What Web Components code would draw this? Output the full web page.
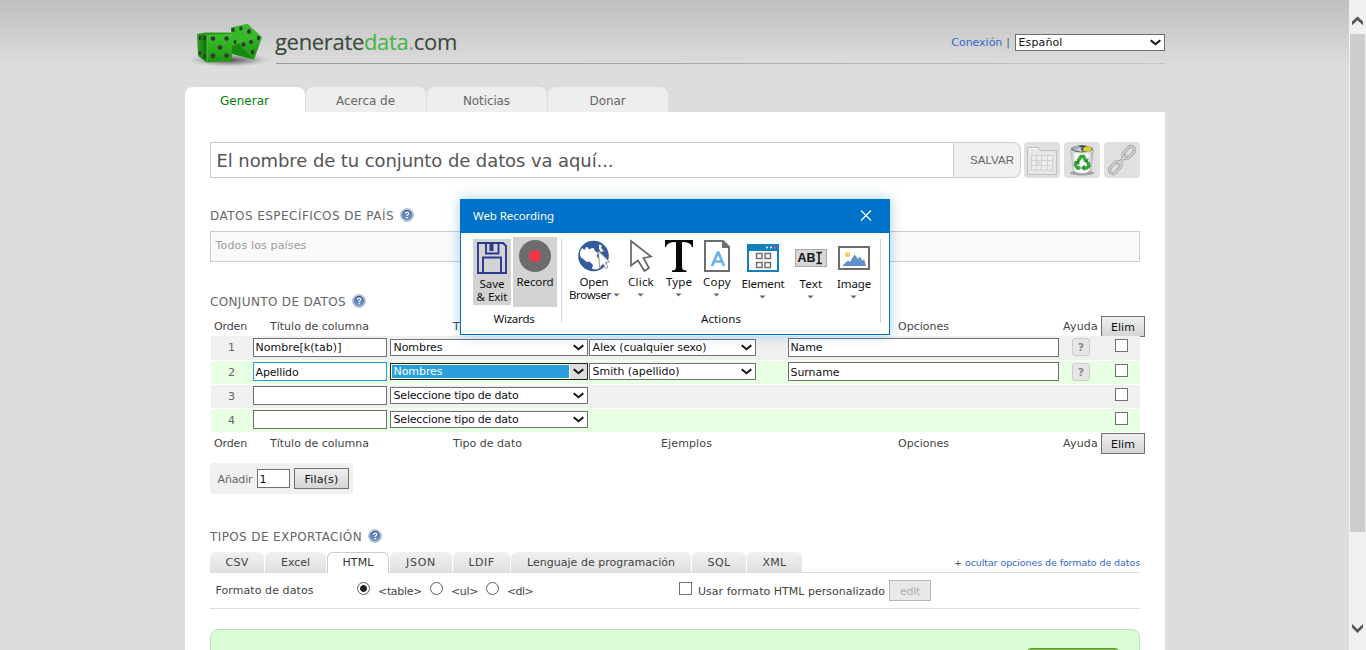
<!DOCTYPE html>
<html lang="es">
<head>
<meta charset="utf-8">
<title>generatedata.com</title>
<style>
html,body{margin:0;height:650px;overflow:hidden;background:#ddd}
body{font:11px/16px "DejaVu Sans",Verdana,sans-serif;color:#444}
</style>
</head>
<body>
<gd-app></gd-app>
<script>
const define = (name, html, after) => customElements.define(name, class extends HTMLElement {
  connectedCallback() {
    if (this.shadowRoot) return;
    const t = document.createElement('template');
    t.innerHTML = typeof html === 'function' ? html(this) : html;
    this.attachShadow({mode: 'open'}).append(t.content.cloneNode(true));
    if (after) after(this);
  }
});

/* Application shell */
define('gd-app', `
<style>
:host{display:flex;width:1366px;height:650px;overflow:hidden;position:relative}
.page{flex:1;background:linear-gradient(#bfbfbf,#ddd 66px)}
.col{width:980px;margin-left:185px}
gd-dialog{position:absolute;left:460px;top:199px}
</style>
<div class="page"><div class="col"><gd-header></gd-header><gd-nav></gd-nav><gd-content></gd-content></div></div>
<gd-scrollbar></gd-scrollbar>
<gd-dialog></gd-dialog>`);

define('gd-scrollbar', `
<style>
:host{display:flex;flex-direction:column;width:17px;height:650px;background:#f0f0f0;box-sizing:border-box}
.thumb{height:498px;width:15px;margin-left:1px;background:#cdcdcd}
svg{display:block}
.sp{flex:1}
</style>
<svg width="17" height="34"><path d="M3 25.2V21.6L8.5 16.6L14 21.6V25.2L8.5 20.2Z" fill="#555"/></svg>
<div class="thumb"></div><div class="sp"></div>
<svg width="17" height="34"><path d="M3 8V11.6L8.5 17L14 11.6V8L8.5 13.2Z" fill="#555"/></svg>`);

define('gd-header', `
<style>
:host{display:flex;height:87px;box-sizing:border-box}
svg{display:block;margin:16px 0 0 1px;flex:none}
.r{flex:1;display:flex;height:64px;box-sizing:border-box;border-bottom:1px solid;border-image:linear-gradient(90deg,#999,#aaa 50%,#c8c8c8) 1;justify-content:space-between}
.logo{font:22px/30px "Open Sans","Noto Sans",sans-serif;color:#3a4a3c;margin:26px 0 0 -1px;-webkit-text-stroke:.15px}
.g{color:#48b648}.dot{color:#999}
.user{display:flex;margin-top:34px;height:17px;line-height:17px}
.a{color:#36c}.bar{color:#467;margin:0 5px 0 4px}
</style>
<svg width="90" height="56" viewBox="186 16 90 56">
<defs><radialGradient id="s"><stop offset="0" stop-color="#222" stop-opacity=".8"/><stop offset=".6" stop-color="#555" stop-opacity=".35"/><stop offset="1" stop-color="#999" stop-opacity="0"/></radialGradient>
<linearGradient id="f" x1="0" y1="0" x2="0" y2="1"><stop offset="0" stop-color="#40c230"/><stop offset="1" stop-color="#1c9512"/></linearGradient>
<linearGradient id="l"><stop offset="0" stop-color="#30a025"/><stop offset="1" stop-color="#106b0a"/></linearGradient></defs>
<ellipse cx="229" cy="60" rx="41" ry="7" fill="url(#s)"/>
<path d="M231 27.500L247.500 24L262 37.500L254 59.500L232 53Z" fill="url(#f)"/>
<path d="M231 27.500L247.500 24L262 37.500L239 43L232 47Z" fill="#36b829"/>
<path d="M232 46L239 43L254 59.500L232 54Z" fill="#168c0e"/>
<path d="M247.500 25L239 43L254 59" fill="none" stroke="#40c230" stroke-width=".5"/>
<path d="M197 34L207 34L207 62.500L198 56Z" fill="url(#l)"/>
<path d="M207 34L232 33V61L207 62.500Z" fill="url(#f)"/>
<path d="M197 34L205 32.500L230 32.500L232 34L207 35Z" fill="#2a9c1f"/>
<path d="M207 35V62" stroke="#54dc40" stroke-width=".7"/>
<g fill="#313931"><circle cx="213" cy="38.500" r="2.300"/><circle cx="226.500" cy="38.500" r="2.200"/><circle cx="220" cy="47.500" r="2.300"/><circle cx="213" cy="56" r="2.400"/><circle cx="226.500" cy="55.500" r="2.300"/>
<ellipse cx="200" cy="38" rx="1.200" ry="2.200"/><ellipse cx="204.500" cy="38.500" rx="1.300" ry="2.300"/><ellipse cx="200" cy="53" rx="1.200" ry="2.200"/><ellipse cx="204.500" cy="56" rx="1.300" ry="2.300"/>
<ellipse cx="233" cy="30" rx="1.700" ry="1.900"/><ellipse cx="241" cy="28.500" rx="1.700" ry="1.900"/><ellipse cx="249" cy="31.500" rx="1.900" ry="2.500"/><ellipse cx="258.500" cy="38" rx="1.700" ry="2.300"/><ellipse cx="251" cy="42" rx="1.900" ry="2.300"/><ellipse cx="243.500" cy="44.500" rx="1.900" ry="2.300"/><ellipse cx="252.500" cy="52" rx="1.800" ry="2.300"/><ellipse cx="235" cy="42" rx="1.500" ry="2"/></g>
</svg>
<div class="r"><div class="logo"><fit-text w="182">generate<span class="g">data</span><span class="dot">.</span>com</fit-text></div>
<div class="user"><fit-text class="a" w="51">Conexión</fit-text><span class="bar">|</span><gd-select w="150" tw="44">Español</gd-select></div></div>`);

define('gd-nav', `
<style>
:host{display:flex;gap:1px;height:25px;font-size:12px;line-height:28px}
div{width:120px;border-radius:8px 8px 0 0;background:#eee;color:#666;text-align:center;box-sizing:border-box;padding-right:1px}
.on{background:#fff;color:#008010}
</style>
<div class="on"><fit-text w="49">Generar</fit-text></div><div><fit-text w="59">Acerca de</fit-text></div><div><fit-text w="47">Noticias</fit-text></div><div><fit-text w="36">Donar</fit-text></div>`);

const selArrow = `<svg width="13" height="9" viewBox="0 0 13 9"><path d="M1.700 2.300L6.500 6.300L11.300 2.300" fill="none" stroke="#111" stroke-width="2"/></svg>`;
define('gd-select', h => `
<style>
:host{display:flex;box-sizing:border-box;width:${h.getAttribute('w')}px;height:17px;border:1px solid ${h.hasAttribute('focus') ? '#222' : '#707070'};background:#fff;color:#111;line-height:15px;justify-content:space-between;align-items:center}
.t{padding-left:2.500px}
.ar{width:17px;height:15px;display:flex;align-items:center;justify-content:center}
:host([focus]) .t{background:#269fdc;color:#fff;margin:0 0 0 1px;padding-left:1.500px;height:13px;line-height:14px;flex:1}
:host([focus]) .ar{background:#ddd;margin-left:1px}
</style><div class="t"><fit-text w="${h.getAttribute('tw')}"><slot></slot></fit-text></div><div class="ar">${selArrow}</div>`);

define('gd-input', h => `
<style>
:host{display:block;box-sizing:border-box;width:${h.getAttribute('w')}px;height:19px;border:1px solid ${h.hasAttribute('focus') ? '#269fdc' : '#707070'};background:#fff;color:#111;line-height:18px;padding-left:1.500px}
</style><fit-text w="${h.getAttribute('tw') || 0}"><slot></slot></fit-text>`);

define('gd-button', h => `
<style>
:host{display:block;box-sizing:border-box;width:${h.getAttribute('w')}px;height:21px;border:1px solid #707070;background:linear-gradient(#f0f0f0,#d4d4d4);color:#111;line-height:21px;text-align:center}
:host([disabled]){border-color:#b5b5b5;background:#e8e8e8;color:#b0b0b0}
</style><fit-text w="${h.getAttribute('tw')}"><slot></slot></fit-text>`);

define('gd-check', `<style>:host{display:block;box-sizing:border-box;width:13px;height:13px;border:1px solid #707070;background:#fff;flex:none}</style>`);
define('gd-radio', `<style>:host{display:block;box-sizing:border-box;width:13px;height:13px;border:1px solid #606060;border-radius:50%;background:#fff;flex:none}:host([on]){background:radial-gradient(circle,#222 3px,#fff 3.8px)}</style>`);

define('gd-heading', h => `
<style>
:host{display:flex;height:16px;font-size:12px;line-height:19px;color:#666;align-items:flex-start}
svg{margin:1px 0 0 6px}
</style><fit-text w="${h.getAttribute('w')}"><slot></slot></fit-text>
<svg width="14" height="14" viewBox="0 0 14 14"><defs><linearGradient id="h" x1="0" y1="0" x2="0" y2="1"><stop offset="0" stop-color="#3c64a0"/><stop offset="1" stop-color="#7fa5d8"/></linearGradient></defs><circle cx="7" cy="7" r="6.300" fill="#dde4ee" stroke="#8495b0" stroke-width=".8"/><circle cx="7" cy="7" r="4.900" fill="url(#h)" stroke="#35588f" stroke-width=".5"/><path d="M5.300 5.700Q5.400 4.100 7.100 4.100T8.700 5.500Q8.700 6.400 7.200 7.300V8M7.200 9V10.200" fill="none" stroke="#fff" stroke-width="1.300"/></svg>`);

define('gd-titles', `
<style>
:host{display:grid;grid-template-columns:56px 183px 208px 237px 165px 38px 44px;padding-left:4px;width:931px;color:#444;line-height:16px}
fit-text{margin-top:3px}
</style>
<fit-text w="33">Orden</fit-text><fit-text w="99">Título de columna</fit-text><fit-text w="69">Tipo de dato</fit-text><fit-text w="51">Ejemplos</fit-text><fit-text w="51">Opciones</fit-text><fit-text w="35">Ayuda</fit-text><gd-button w="44" tw="24">Elim</gd-button>`);

define('gd-row', h => {
  const a = n => h.getAttribute(n) || '';
  const n = +a('n');
  return `
<style>
:host{display:grid;grid-template-columns:42px 137px 199px 199px 284px 43px 25px;box-sizing:border-box;height:24px;margin-left:1px;background:${n % 2 ? '#f0f0f0' : '#e8ffe4'};${n > 1 ? 'box-shadow:inset 0 1px #fff;' : ''}position:relative}
.n{color:#666;text-align:center;line-height:23px;padding:${n > 1 ? 1 : 0}px 1px 0 0}
gd-input{margin-top:2px}gd-select{margin-top:3px}
gd-check{margin-top:${n > 1 ? 4 : 3}px}
.q{margin-top:${n > 1 ? 3 : 2}px;width:18px;height:18px;box-sizing:border-box;border:1px solid #ccc;border-radius:3px;background:#e6e6e6;color:#888;font:bold 11px/17px "DejaVu Sans",sans-serif;text-align:center}
</style>
<div class="n">${n}</div>
<gd-input w="134" tw="${a('tw')}" ${n === 2 ? 'focus style="line-height:19px"' : ''}>${a('title-text')}</gd-input>
<gd-select w="198" tw="${a('kw')}" ${n === 2 ? 'focus' : ''} style="line-height:${n > 1 ? 17 : 15}px">${a('kind')}</gd-select>
${a('sample') ? `<gd-select w="167" tw="${a('sw')}" style="line-height:${n > 1 ? 17 : 15}px">${a('sample')}</gd-select><gd-input w="271" tw="${a('ow')}" style="line-height:${n > 1 ? 19 : 18}px">${a('option')}</gd-input><div class="q">?</div>` : '<i></i><i></i><i></i>'}
<gd-check></gd-check>`;
});

define('gd-tabs', `
<style>
:host{display:flex;height:21px;box-sizing:border-box;border-bottom:1px solid #ddd;color:#444;line-height:21px}
.t{box-sizing:border-box;text-align:center;height:20px;background:linear-gradient(#f1f1f1,#e0e0e0);border-radius:6px 6px 0 0;margin-right:1px}
.on{border:1px solid #ccc;border-bottom:0;height:21px;background:#fff;line-height:19px;color:#333}
.r{margin-left:auto;font-size:9.500px;color:#36c;display:flex}
.p{color:#444;margin-right:4px}
</style>
<div class="t" style="width:54px"><fit-text w="23">CSV</fit-text></div>
<div class="t" style="width:61px"><fit-text w="29">Excel</fit-text></div>
<div class="t on" style="width:62px"><fit-text w="31">HTML</fit-text></div>
<div class="t" style="width:62px"><fit-text w="30">JSON</fit-text></div>
<div class="t" style="width:57px"><fit-text w="26">LDIF</fit-text></div>
<div class="t" style="width:180px"><fit-text w="148">Lenguaje de programación</fit-text></div>
<div class="t" style="width:54px"><fit-text w="23">SQL</fit-text></div>
<div class="t" style="width:55px"><fit-text w="24">XML</fit-text></div>
<div class="r"><fit-text class="p" w="7">+</fit-text><fit-text w="175">ocultar opciones de formato de datos</fit-text></div>`);

define('gd-format', `
<style>
:host{display:flex;height:36px;box-sizing:border-box;border-bottom:1px solid #ddd;padding-left:5.500px;color:#444;align-items:flex-start}
fit-text{margin-top:11px}.f{margin:10px 43.500px 0 0}
gd-radio,gd-check{margin:9px 8px 0}
gd-check{margin:9px 6px 0 146px}gd-button{margin:7px 0 0 4px}
</style>
<fit-text class="f" w="98">Formato de datos</fit-text>
<gd-radio on style="margin-left:0"></gd-radio><fit-text w="44">&lt;table&gt;</fit-text>
<gd-radio></gd-radio><fit-text w="27">&lt;ul&gt;</fit-text><gd-radio></gd-radio><fit-text w="26">&lt;dl&gt;</fit-text>
<gd-check></gd-check><fit-text w="187">Usar formato HTML personalizado</fit-text><gd-button disabled w="42" tw="20">edit</gd-button>`);

define('gd-namebar', `
<style>
:host{display:flex;height:36px}
.name{box-sizing:border-box;width:744px;flex:none;border:1px solid #ccc;padding-left:5.500px;font-size:18px;line-height:35px;color:#555}
.save{box-sizing:border-box;width:67px;flex:none;border:1px solid #ccc;border-left:0;border-radius:0 8px 8px 0;background:#f0f0f0;font:11.500px/35px "Liberation Sans",Arial,sans-serif;color:#666;padding-left:16px}
.b{width:36px;height:36px;flex:none;border-radius:4px;background:#e0e0e0;margin-left:4px}
.b:nth-of-type(3){margin-left:3px}
svg{display:block}
</style>
<div class="name"><fit-text w="397">El nombre de tu conjunto de datos va aquí...</fit-text></div>
<div class="save"><fit-text w="44">SALVAR</fit-text></div>
<div class="b"><svg width="36" height="36"><path d="M3.500 32.500V5.500H14.500L16 8.500H32.500V32.500Z" fill="#e6e6e6" stroke="#c0c0c0"/><path d="M4.500 6.500H14" stroke="#f4f4f4"/><rect x="7" y="13" width="22" height="15" fill="#ededed"/><rect x="12.500" y="18.500" width="5" height="4" fill="#d5e0ee"/><path d="M7 13.500H29M7 18.500H29M7 23.500H29M7 28H29M7.500 13V28M12.500 13V28M17.500 13V28M23.500 13V28M28.500 13V28" stroke="#d2d2d2" fill="none"/></svg></div>
<div class="b"><svg width="36" height="36"><defs><linearGradient id="c"><stop offset="0" stop-color="#bbb"/><stop offset=".25" stop-color="#fff"/><stop offset=".75" stop-color="#f8f8f8"/><stop offset="1" stop-color="#aaa"/></linearGradient></defs><ellipse cx="18" cy="31" rx="12" ry="2.500" fill="#777" opacity=".6"/><path d="M6.500 8L9.500 29Q18 34 26.500 29L29.500 8Z" fill="url(#c)" stroke="#aaa" stroke-width=".6"/><ellipse cx="18" cy="7" rx="11.500" ry="4" fill="#666" stroke="#e4e4e4" stroke-width="1"/><path d="M8 6L13 3.500L18 5L16 9L9 8Z" fill="#9fadb5"/><path d="M14 3.500H22L19 6Z" fill="#444"/><path d="M20 5L26 4L28 7L25 10L19 9Z" fill="#d8cf35"/><path d="M11 8L16 6L18 10Z" fill="#ccd8e0"/><g fill="none" stroke="#34a936" stroke-width="3.400"><path d="M14 19L17 14.500H19.500L21.500 18"/><path d="M12.500 19.500L11.500 23L13.500 26H16.500"/><path d="M24 20L25 24L22.500 26H19"/></g><path d="M19 19L24.500 16.500L23.500 21.500ZM20.500 22.500V29L17 26ZM10 20L15 18L15.500 23Z" fill="#238c2b"/></svg></div>
<div class="b"><svg width="36" height="36"><g fill="none" transform="rotate(-48 18 18)"><g stroke="#a4a4a4" stroke-width="3.200"><rect x="1" y="14.500" width="14" height="7" rx="3.500"/><rect x="21" y="14.500" width="14" height="7" rx="3.500"/><path d="M11 18H25"/></g><g stroke="#d2d2d2" stroke-width="1.600"><rect x="1" y="14.500" width="14" height="7" rx="3.500"/><rect x="21" y="14.500" width="14" height="7" rx="3.500"/><path d="M11 18H25"/></g></g></svg></div>`);

define('gd-content', `
<style>
:host{display:block;background:#fff;height:538px;box-sizing:border-box;padding:30px 25px 0}
.country{height:31px;box-sizing:border-box;border:1px solid #ccc;background:#fafafa;color:#999;margin-top:8px;padding:6px 0 0 4.500px}
.add{display:flex;width:143px;height:31px;box-sizing:border-box;background:#f0f0f0;border-radius:4px;margin-top:10px;padding-left:7.500px;color:#666}
.add>fit-text{margin:9px 4.500px 0 0}.add gd-input{margin:6px 4px 0 0;line-height:19px}.add gd-button{margin-top:5px}
.gen{height:60px;border:1px solid #b9e3b6;border-radius:8px;background:#dbfdd6;margin-top:20px;display:flex;justify-content:flex-end;padding:18px 20px 0 0;box-sizing:border-box}
.btn{width:92px;height:30px;border:1px solid #559c25;background:#82bd50;border-radius:4px;box-sizing:border-box}
</style>
<gd-namebar></gd-namebar>
<gd-heading w="184" style="margin-top:29px">DATOS ESPECÍFICOS DE PAÍS</gd-heading>
<div class="country"><fit-text w="91">Todos los países</fit-text></div>
<gd-heading w="136" style="margin-top:31px">CONJUNTO DE DATOS</gd-heading>
<gd-titles style="height:20px;margin-top:7px"></gd-titles>
<gd-row n="1" title-text="Nombre[k(tab)]" tw="86" kind="Nombres" kw="49" sample="Alex (cualquier sexo)" sw="114" option="Name" ow="32"></gd-row>
<gd-row n="2" title-text="Apellido" tw="43" kind="Nombres" kw="49" sample="Smith (apellido)" sw="87" option="Surname" ow="49"></gd-row>
<gd-row n="3" kind="Seleccione tipo de dato" kw="125"></gd-row>
<gd-row n="4" kind="Seleccione tipo de dato" kw="125"></gd-row>
<gd-titles style="height:20px;margin-top:1px"></gd-titles>
<div class="add"><fit-text w="35">Añadir</fit-text><gd-input w="33" tw="7">1</gd-input><gd-button w="55" tw="34">Fila(s)</gd-button></div>
<gd-heading w="152" style="margin-top:34px">TIPOS DE EXPORTACIÓN</gd-heading>
<gd-tabs style="margin-top:8px"></gd-tabs>
<gd-format></gd-format>
<div class="gen"><div class="btn"></div></div>`);

/* Recorder window */
define('gd-tool', h => `
<style>
:host{display:block;box-sizing:border-box;width:${h.getAttribute('w')}px;height:70px;text-align:center;line-height:13px;flex:none}
.i{height:${h.getAttribute('ih') || 38}px;display:flex;justify-content:center;align-items:center}
.c{display:block;margin:5px auto 0;position:relative;left:-.5px}
</style><div class="i"><slot name="icon"></slot></div><slot></slot>${h.hasAttribute('caret') ? '<svg class="c" width="7" height="4"><path d="M0.500 0.500H6.500L3.500 3.500Z" fill="#666"/></svg>' : ''}`);

define('gd-dialog', `
<style>
:host{display:block;width:430px;height:136px;box-sizing:border-box;border:1px solid #0072c9;background:#fff;box-shadow:0 0 12px rgba(20,130,210,.38);font-family:"Noto Sans","Open Sans",sans-serif;font-size:11.500px;color:#111}
.bar{height:33px;background:#0072c9;color:#fff;display:flex;justify-content:space-between;line-height:30px;padding:0 16px 2px 12px;align-items:center;box-sizing:border-box}
.body{display:flex;padding-top:4px}
.sep{width:1px;height:84px;background:#d5d5d5;margin:2px 6px 0 4px}
.caps{line-height:14px;text-align:center;margin-top:5px}
.tools{display:flex}
svg{display:block}
.sel{background:#d3d3d3}
.br{display:flex;align-items:center;gap:2px;padding-left:1px}
</style>
<div class="bar"><fit-text w="81">Web Recording</fit-text><svg width="14" height="14"><path d="M2 1.500L12 11.500M12 1.500L2 11.500" stroke="#fff" stroke-width="1.200"/></svg></div>
<div class="body">
<div style="padding-left:12px"><div class="tools">
<gd-tool class="sel" w="38" ih="38" style="height:66px;margin:2px 2px 0 0"><svg slot="icon" width="30" height="32"><path d="M1 1H26L29 4V31H1ZM9 1V11.500H21.500V1M6 31V15.500H24V31" fill="none" stroke="#2b388f" stroke-width="1.900"/><rect x="12.500" y="2" width="4" height="7" fill="#2b388f"/></svg><fit-text w="25">Save</fit-text><br><fit-text w="31">&amp; Exit</fit-text></gd-tool>
<gd-tool class="sel" w="44"><svg slot="icon" width="34" height="34"><circle cx="17" cy="17" r="16" fill="#6c6c6c"/><circle cx="17" cy="17" r="6" fill="#f0354b"/></svg><fit-text w="37">Record</fit-text></gd-tool>
</div><div class="caps" style="padding-right:2px"><fit-text w="41">Wizards</fit-text></div></div>
<div class="sep"></div>
<div><div class="tools">
<gd-tool w="52"><svg slot="icon" width="34" height="34"><circle cx="16.500" cy="17" r="15.300" fill="#335b9d"/><path d="M3 13L5 9L7.500 11L9 8L11 8.500L12 10.500L15 9L17 9.500L18 12L21 14L19.500 17L22 20L24.500 24L24 28L20 30.500L15 30L16 26L12.500 22.500L9.500 23L7 20.500L4 18.500L3 16Z" fill="#fff"/><path d="M22 5.500L25 6.500L24 9L27 12L24 13L22 10Z" fill="#fff"/><path d="M21.500 12L32.500 23L28.500 23.500L31 28.500L28.500 29.500L26.500 25L22.500 28Z" fill="#fff" stroke="#999" stroke-width="1"/></svg><fit-text w="29">Open</fit-text><br><div class="br"><fit-text w="42">Browser</fit-text><svg width="7" height="4"><path d="M0.500 0.500H6.500L3.500 3.500Z" fill="#666"/></svg></div></gd-tool>
<gd-tool caret w="42"><svg slot="icon" width="24" height="34"><path d="M2 2V26.500L9 21.500L15.500 32L20 29L14.500 19L22 17.500Z" fill="#fff" stroke="#666" stroke-width="1.700"/></svg><fit-text w="26">Click</fit-text></gd-tool>
<gd-tool caret w="34"><svg slot="icon" width="30" height="34"><path d="M1 1H29V8H28Q27 3 18 3V28Q18 31.500 22.500 31.500V33H8V31.500Q12 31.500 12 28V3Q3 3 2 8H1Z" fill="#080808"/></svg><fit-text w="26">Type</fit-text></gd-tool>
<gd-tool caret w="42"><svg slot="icon" width="28" height="34"><path d="M2 2H20L26 8V32H2Z" fill="#fff" stroke="#6e6e6e" stroke-width="2"/><path d="M19 1V9H27Z" fill="#6e6e6e"/><path d="M9 27L14.800 13.500H15.400L21 27M11.500 22.500H18.500" fill="none" stroke="#69b4e3" stroke-width="2.700"/></svg><fit-text w="28">Copy</fit-text></gd-tool>
<gd-tool caret w="50" ih="40"><svg slot="icon" width="32" height="30" style="margin-top:2px"><rect x="1" y="3" width="30" height="25" fill="#fff" stroke="#1181be" stroke-width="2"/><path d="M0 1H32V8H0Z" fill="#1181be"/><g fill="#fff"><circle cx="20" cy="4.500" r="1"/><circle cx="24" cy="4.500" r="1"/></g><circle cx="28" cy="4.500" r="1.300" fill="#ff4b67"/><path d="M9.500 10.500H15V15.500H9.500ZM18 10.500H23.500V15.500H18ZM9.500 19.500H15V24.500H9.500ZM18 19.500H23.500V24.500H18Z" fill="#fff" stroke="#707070" stroke-width="1.500"/></svg><fit-text w="43">Element</fit-text></gd-tool>
<gd-tool caret w="46" ih="40"><svg slot="icon" width="32" height="18" style="margin-top:2px"><rect x=".5" y=".5" width="31" height="17" fill="#d6d6d6" stroke="#aaa"/><text x="2.500" y="13.300" font-family="Liberation Sans" font-weight="bold" font-size="12.500" textLength="18" lengthAdjust="spacingAndGlyphs" fill="#111">AB</text><path d="M21.500 3.500H23L24 4.500L25 3.500H27M24 4V14M21.500 14.500H23L24 13.500L25 14.500H27" fill="none" stroke="#111" stroke-width="1.500"/></svg><fit-text w="23">Text</fit-text></gd-tool>
<gd-tool caret w="40" ih="40"><svg slot="icon" width="32" height="24" style="margin-top:2px"><rect x="1" y="1" width="30" height="22" fill="#fff" stroke="#6d6d6d" stroke-width="2"/><circle cx="9.500" cy="8.500" r="2.600" fill="#ecd063"/><path d="M4 20L10 14.500L12 16L16.500 8.500L20 13L22 10.500L24.500 15L26 13L28 20Z" fill="#6090ca"/></svg><fit-text w="34">Image</fit-text></gd-tool>
</div><div class="caps"><fit-text w="40">Actions</fit-text></div></div>
<div class="sep" style="margin-left:6px"></div>
</div>`);

/* Fits its text to a given width by adjusting the tracking */
customElements.define('fit-text', class extends HTMLElement {
  connectedCallback() {
    if (this.shadowRoot) return;
    const root = this.attachShadow({mode: 'open'});
    const w = +this.getAttribute('w');
    root.innerHTML = `<style>:host{display:inline-block;width:${w}px;white-space:nowrap;text-align:left;vertical-align:top}</style><span><slot></slot></span>`;
    const slot = root.querySelector('slot');
    const text = slot.assignedNodes({flatten: true}).map(n => n.textContent).join('');
    if (!w || !text) return;
    const span = root.querySelector('span');
    const natural = span.getBoundingClientRect().width;
    span.style.letterSpacing = ((w - natural) / text.length) + 'px';
  }
});
</script>
</body>
</html>
